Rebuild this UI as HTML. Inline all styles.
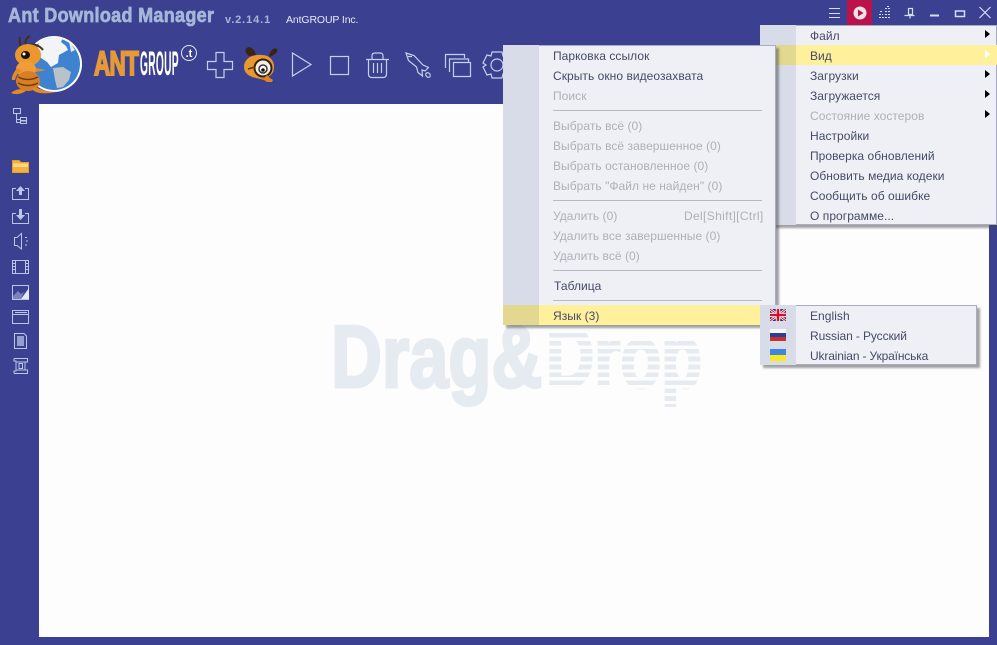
<!DOCTYPE html>
<html lang="ru"><head><meta charset="utf-8"><style>
html,body{margin:0;padding:0}
body{width:997px;height:645px;position:relative;overflow:hidden;background:#3b4190;font-family:"DejaVu Sans","Liberation Sans",sans-serif}
.abs,svg{position:absolute;display:block}
.client{position:absolute;left:39px;top:104px;width:950px;height:533px;background:#fdfdfe}
.title{position:absolute;left:8px;top:4px;font:bold 20px/24px "Liberation Sans",sans-serif;color:#a5b6d8;-webkit-text-stroke:.7px #a5b6d8;white-space:nowrap;transform-origin:0 0;transform:scaleX(.9);letter-spacing:.35px}
.ver{position:absolute;left:225px;top:13px;font:bold 11px/14px "Liberation Sans",sans-serif;color:#a5b6d8;letter-spacing:.9px;white-space:nowrap}
.co{position:absolute;left:286px;top:13px;font:10.5px/14px "Liberation Sans",sans-serif;color:#e6eaf6;white-space:nowrap;letter-spacing:-.12px}
.dd{position:absolute;font:bold 88px/100px "Liberation Sans",sans-serif;white-space:nowrap;transform-origin:0 0;color:#e6eaf1;-webkit-text-stroke:3px #e6eaf1}
.menu{position:absolute;background:#eff0f6;box-shadow:3px 3px 2px rgba(70,70,70,.5);outline:1px solid #a8abc4;outline-offset:-1px}
.stripe{position:absolute;left:0;top:0;bottom:0;width:36px;background:#d8dce9}
.hl{position:absolute;left:0;right:0;height:20px;background:#fff09c}
.hl i{position:absolute;left:0;top:0;bottom:0;width:36px;background:#e3d88f}
.m{position:absolute;font:12px/20px "Liberation Sans",sans-serif;color:#454a66;white-space:nowrap;letter-spacing:.05px}
.d{color:#aeb0b8}
.sep{position:absolute;height:1px;background:#b8b9c4}
.arr{position:absolute;width:0;height:0;border-left:5px solid #000;border-top:4px solid transparent;border-bottom:4px solid transparent}
</style></head><body>
<div class="client"></div>
<div class="title">Ant Download Manager</div>
<div class="ver">v.2.14.1</div>
<div class="co">AntGROUP Inc.</div>

<!-- Logo -->
<svg style="left:0;top:30px" width="100" height="70" viewBox="0 0 100 70">
<circle cx="54" cy="34" r="28" fill="#fff"/>
<circle cx="54" cy="34" r="26" fill="#3d83cf"/>
<g transform="translate(-3 0)">
<path d="M42 12C48 6 58 5 66 8L64 12 69 16 71 20 62 25 61 33 54 37 50 32 44 28 40 20Z" fill="#f3f4f5"/>
<path d="M56 38L66 37 74 42 72 50 66 57 60 58 58 50Z" fill="#b9c2c9"/>
<path d="M72 11L78 20 74 22Z" fill="#e8ecef"/>
</g>
<path d="M20 7C19 12 20 16 22 19M30 6C25 8 25 13 26 16M29 15C34 13 40 16 43 20" stroke="#43301c" stroke-width="2" fill="none"/>
<ellipse cx="28" cy="25" rx="13" ry="11" fill="#ec962e"/>
<ellipse cx="25.500" cy="25" rx="4.500" ry="4" fill="#16120f"/><circle cx="24" cy="24" r="1.500" fill="#fff"/>
<path d="M26 36L46 40 36 42 24 40Z" fill="#e48a26"/>
<ellipse cx="26" cy="39" rx="10" ry="8" fill="#ef9d3b"/>
<ellipse cx="28" cy="51" rx="12" ry="10" fill="#d97f22"/>
<path d="M18 47Q28 52 38 47M18 53Q28 58 38 53" stroke="#6b3c13" stroke-width="1.500" fill="none"/>
<path d="M17 38Q11 46 12 50L15 50Q16 44 22 41ZM20 59Q14 60 11 63 18 66 26 61ZM36 57Q42 61 56 62 48 64 40 63 34 62 32 59Z" fill="#e08a2a"/>
</svg>

<!-- antGROUP -->
<div class="abs" style="left:94px;top:47px;font:bold 34px/34px 'Liberation Sans',sans-serif;color:#e59a37;-webkit-text-stroke:2px #e59a37;transform-origin:0 0;transform:scaleX(.66);white-space:nowrap;text-transform:uppercase;letter-spacing:-1px">ant</div>
<div class="abs" style="left:140px;top:47px;font:bold 34px/34px 'Liberation Sans',sans-serif;color:#fff;transform-origin:0 0;transform:scaleX(.3);white-space:nowrap;letter-spacing:1px">GROUP</div>
<svg style="left:180px;top:44px" width="18" height="18"><circle cx="9" cy="9" r="7.500" fill="none" stroke="#e8ecf6" stroke-width="1"/><text x="9" y="13" text-anchor="middle" font-family="Liberation Sans" font-weight="bold" font-size="11" fill="#fff">.t</text></svg>

<!-- toolbar icons -->
<svg style="left:0;top:0" width="510" height="104" fill="none" stroke="#c4d1ec" stroke-width="1.200">
<path d="M216 52.500H224V61.500H232.500V69.500H224V77.500H216V69.500H207.500V61.500H216Z"/>
<path d="M292.500 53V76L311 64.500Z"/>
<rect x="330.500" y="56.500" width="18" height="18"/>
<path d="M366 59.500H389M372 59V56Q372 53 375 53H380Q383 53 383 56V59M368.500 60V74Q368.500 77.500 372 77.500H383Q386.500 77.500 386.500 74V60M373.500 63V73M377.500 63V73M381.500 63V73"/>
<path d="M406 53L414 55.500L423 65L428.500 67.500L425 71L422 70L422.500 76L418 72.500L416.500 67L408.500 60.500ZM408 56.500L412 56.500"/>
<ellipse cx="428" cy="75" rx="2" ry="2.500" transform="rotate(-45 428 75)"/>
<path d="M445.500 68V54.500H464.500V58M449.500 72V59H468.500V62M453.500 62.500H470.500V76.500H453.500Z" />
<circle cx="497" cy="65" r="6"/>
<path d="M492 52H502L503 56 507 55 511 63 508 65 511 67 507 75 503 74 502 78H492L491 74 487 75 483 67 486 65 483 63 487 55 491 56Z"/>
</svg>
<!-- ant magnifier -->
<svg style="left:243px;top:47px" width="36" height="36" viewBox="0 0 36 36">
<path d="M6 9C2 6 1 1 6 0 10 1 12 4 13 8M26 8C28 3 31 0 34 2 36 5 31 8 27 10" fill="#3a2413"/>
<path d="M1 20C1 11 10 7 19 8 27 8 31 14 31 20 31 26 28 30 20 31 10 32 1 28 1 20Z" fill="#e8982f"/>
<circle cx="20" cy="21" r="8.500" fill="#f3efe4" stroke="#33210f" stroke-width="2"/>
<circle cx="20" cy="22" r="4" fill="#fff" stroke="#333" stroke-width="1.500"/><circle cx="20" cy="23" r="1.800" fill="#111"/>
<path d="M5 22L12 20" stroke="#5c3814" stroke-width="1.500"/>
<path d="M13 31H21L24 28 27 31 30 33 29 35 24 35 21 33Z" fill="#df8220"/>
</svg>

<!-- Window controls -->
<div class="abs" style="left:847px;top:0;width:25px;height:25px;background:#bb124c"></div>
<svg style="left:825px;top:0" width="172" height="26" fill="none" stroke="#d5ddf0" stroke-width="1">
<path d="M4 8.500H15M4 13.500H15M4 17.500H15"/>
<circle cx="35" cy="13" r="6.500" fill="#e9e3e8" stroke="none"/><path d="M33 9.500V16.500L38.500 13Z" fill="#bb124c" stroke="none"/>
<path d="M54 17.500H65M54 14.500H58M60 14.500H65M55 11.500H58M60 11.500H65M60 8.500H65M62 6.500H65" stroke-dasharray="2 1"/>
<path d="M83.500 8.500H87.500V14.500H83.500ZM79.500 15.500H89.500M85 15.500V18.500" stroke-width="1.200"/>
<path d="M105 15.500H114" stroke-width="2"/>
<rect x="130.500" y="11" width="9" height="5.500" stroke-width="1.500"/>
<path d="M154.500 7L165.500 18M165.500 7L154.500 18" stroke-width="1.200"/>
</svg>

<!-- Side icons -->
<svg style="left:0;top:104px" width="39" height="280" fill="none" stroke="#b9c8e6" stroke-width="1">
<path d="M13.500 4.500H20.500V9.500H13.500ZM20.500 13.500H26.500V16.500H20.500ZM20.500 17H26.500V19.500H20.500ZM16.500 10V15.500H20.500M16.500 15.500V18.500H20.500"/>
<path d="M12.500 56.500H19L21 58.500H28.500V68.500H12.500Z" fill="#f3b23f" stroke="#e89d25"/>
<path d="M13 59.500H28V63H13Z" fill="#fbd683" stroke="none"/>
<path d="M16 84.500H12.500V95.500H28.500V84.500H25"/>
<path d="M19 86H22V91H19ZM16 87L20.500 82 25 87Z" fill="#b9c8e6" stroke="none"/>
<path d="M16 109.500H12.500V119.500H28.500V109.500H25"/>
<path d="M19 105H22V111H25L20.500 116 16 111H19Z" fill="#b9c8e6" stroke="none"/>
<path d="M14.500 133.500V141.500L17 141.500 21.500 145V129.500L17 133.500ZM25 133.500H27M26 137H28M25 141H27"/>
<path d="M12.500 156.500H28.500V169.500H12.500ZM15.500 156.500V169.500M25.500 156.500V169.500M12.500 159.500H15.500M12.500 162.500H15.500M12.500 165.500H15.500M25.500 159.500H28.500M25.500 162.500H28.500M25.500 165.500H28.500"/>
<path d="M12.500 181.500H28.500V195.500H12.500Z"/>
<path d="M13 192L18 187 21 190 24 188 21 195H13Z" fill="#b9c8e6" fill-opacity=".5" stroke="none"/>
<path d="M29 184V195H21Z" fill="#e4ebf6" stroke="none"/>
<path d="M12.500 206.500H28.500V219.500H12.500ZM12.500 210.500H28.500M15 208.500H27"/>
<path d="M14.500 229.500H24L26.500 232V244.500H14.500Z"/>
<rect x="17" y="232" width="7" height="10" fill="#b9c8e6" fill-opacity=".7" stroke="none"/>
<path d="M14 254.500H27.500V258H25M14 269.500H27.500V266H25M16 258H25V266H16ZM14 254.500V257H16V267H14V269.500"/>
<rect x="19" y="259.500" width="3.500" height="5"/>
</svg>

<!-- Drag & Drop -->
<div class="dd" style="left:331px;top:307px;transform:scaleX(.8)">Drag&amp;</div>
<div class="dd" style="left:546px;top:307px;transform:scaleX(.76)">Drop</div>
<div class="abs" style="left:543px;top:320px;width:170px;height:13px;background:#fdfdfe"></div>
<div class="abs" style="left:543px;top:333px;width:170px;height:82px;background:repeating-linear-gradient(180deg,transparent 0 4.700px,#fdfdfe 4.700px 7.900px)"></div>

<!-- Menu 2 -->
<div class="menu" style="left:760px;top:25px;width:237px;height:200px">
<div class="stripe"></div>
<div class="hl" style="top:20px"><i></i></div>
<div class="m" style="left:50px;top:1px">Файл</div>
<div class="m" style="left:50px;top:21px">Вид</div>
<div class="m" style="left:50px;top:41px">Загрузки</div>
<div class="m" style="left:50px;top:61px">Загружается</div>
<div class="m d" style="left:50px;top:81px">Состояние хостеров</div>
<div class="m" style="left:50px;top:101px">Настройки</div>
<div class="m" style="left:50px;top:121px">Проверка обновлений</div>
<div class="m" style="left:50px;top:141px">Обновить медиа кодеки</div>
<div class="m" style="left:50px;top:161px">Сообщить об ошибке</div>
<div class="m" style="left:50px;top:181px">О программе...</div>
<div class="arr" style="left:225px;top:5px"></div>
<div class="arr" style="left:225px;top:25px;border-left-color:#fff"></div>
<div class="arr" style="left:225px;top:45px"></div>
<div class="arr" style="left:225px;top:65px"></div>
<div class="arr" style="left:225px;top:85px"></div>
</div>

<!-- Menu 1 -->
<div class="menu" style="left:503px;top:45px;width:273px;height:280px">
<div class="stripe"></div>
<div class="hl" style="top:260px"><i></i></div>
<div class="m" style="left:50px;top:1px">Парковка ссылок</div>
<div class="m" style="left:50px;top:21px">Скрыть окно видеозахвата</div>
<div class="m d" style="left:50px;top:41px">Поиск</div>
<div class="sep" style="left:50px;width:209px;top:65px"></div>
<div class="m d" style="left:50px;top:71px">Выбрать всё (0)</div>
<div class="m d" style="left:50px;top:91px">Выбрать всё завершенное (0)</div>
<div class="m d" style="left:50px;top:111px">Выбрать остановленное (0)</div>
<div class="m d" style="left:50px;top:131px">Выбрать "Файл не найден" (0)</div>
<div class="sep" style="left:50px;width:209px;top:155px"></div>
<div class="m d" style="left:50px;top:161px">Удалить (0)</div>
<div class="m d" style="left:181px;top:161px;letter-spacing:.35px">Del[Shift][Ctrl]</div>
<div class="m d" style="left:50px;top:181px">Удалить все завершенные (0)</div>
<div class="m d" style="left:50px;top:201px">Удалить всё (0)</div>
<div class="sep" style="left:50px;width:209px;top:225px"></div>
<div class="m" style="left:51px;top:231px">Таблица</div>
<div class="sep" style="left:50px;width:209px;top:255px"></div>
<div class="m" style="left:50px;top:261px">Язык (3)</div>
</div>

<!-- Menu 3 -->
<div class="menu" style="left:760px;top:305px;width:217px;height:60px">
<div class="stripe"></div>
<div class="m" style="left:50px;top:1px">English</div>
<div class="m" style="left:50px;top:21px;letter-spacing:-.1px">Russian - Русский</div>
<div class="m" style="left:50px;top:41px;letter-spacing:-.15px">Ukrainian - Українська</div>
<svg style="left:10px;top:4px" width="16" height="52" viewBox="0 0 16 52">
<rect width="16" height="12" fill="#27307f"/>
<path d="M0 0L16 12M16 0L0 12" stroke="#fff" stroke-width="2.500"/>
<path d="M0 0L16 12M16 0L0 12" stroke="#d3122a" stroke-width="1"/>
<path d="M0 6H16M8 0V12" stroke="#fff" stroke-width="4.500"/>
<path d="M0 6H16M8 0V12" stroke="#d3122a" stroke-width="2.600"/>
<rect y="20" width="16" height="4" fill="#f7f7f7"/><rect y="24" width="16" height="4" fill="#2b3f94"/><rect y="28" width="16" height="4" fill="#c8322a"/>
<rect y="40" width="16" height="6" fill="#3d87e0"/><rect y="46" width="16" height="6" fill="#fbe81e"/>
</svg>
</div>
</body></html>
